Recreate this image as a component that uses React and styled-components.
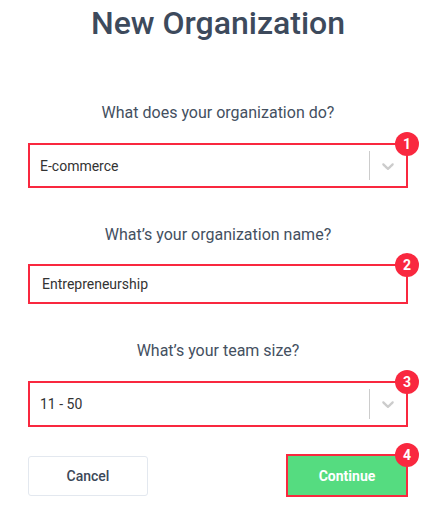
import React from "react";
import styled, { createGlobalStyle } from "styled-components";

const Global = createGlobalStyle`
  html, body { margin: 0; padding: 0; background: #ffffff; }
  body { font-family: Roboto, "Liberation Sans", Arial, sans-serif; }
`;

const Page = styled.div`
  width: 438px;
  padding: 3px 30px 0 28px;
  box-sizing: border-box;
  display: flex;
  flex-direction: column;
`;

const Title = styled.h1`
  margin: 0;
  font-size: 32px;
  line-height: 40px;
  font-weight: 500;
  color: #3d4a5c;
  text-align: center;
`;

const Question = styled.div`
  margin-top: ${(p) => p.$top}px;
  font-size: 16px;
  line-height: 20px;
  color: #44505f;
  text-align: center;
`;

const Field = styled.div`
  position: relative;
  margin-top: ${(p) => p.$top}px;
  height: ${(p) => p.$h}px;
  box-sizing: border-box;
  border: 2px solid #f9283f;
  display: flex;
  align-items: center;
  background: #fff;
`;

const Value = styled.div`
  flex: 1;
  padding-left: ${(p) => p.$pad}px;
  font-size: 14px;
  color: #333333;
`;

const Separator = styled.span`
  align-self: stretch;
  width: 1px;
  margin: 6px 0;
  background: #cccccc;
`;

const Indicator = styled.div`
  padding: 0 8px;
  display: flex;
  align-items: center;
  color: #cccccc;
`;

const Badge = styled.span`
  position: absolute;
  top: -13px;
  right: -13px;
  width: 24px;
  height: 24px;
  border-radius: 50%;
  background: #f9283f;
  color: #fff;
  font-size: 14px;
  font-weight: 700;
  display: flex;
  align-items: center;
  justify-content: center;
  line-height: 1;
`;

const Actions = styled.div`
  margin-top: 27px;
  display: flex;
  justify-content: space-between;
  align-items: center;
`;

const CancelButton = styled.button`
  width: 120px;
  height: 40px;
  box-sizing: border-box;
  border: 1px solid #e3e8ef;
  border-radius: 3px;
  background: #fff;
  font-family: inherit;
  font-size: 14px;
  font-weight: 500;
  color: #3c4858;
  cursor: pointer;
`;

const ContinueWrap = styled.div`
  position: relative;
  width: 122px;
  height: 43px;
  box-sizing: border-box;
  border: 2px solid #f9283f;
`;

const ContinueButton = styled.button`
  width: 100%;
  height: 100%;
  border: none;
  background: #55dc80;
  color: #fff;
  font-family: inherit;
  font-size: 14px;
  font-weight: 700;
  cursor: pointer;
`;

const Chevron = () => (
  <svg width="20" height="20" viewBox="0 0 20 20" fill="currentColor" aria-hidden="true">
    <path d="M4.516 7.548c0.436-0.446 1.043-0.481 1.576 0l3.908 3.747 3.908-3.747c0.533-0.481 1.141-0.446 1.574 0 0.436 0.445 0.408 1.197 0 1.615-0.406 0.418-4.695 4.502-4.695 4.502-0.217 0.223-0.502 0.335-0.787 0.335s-0.57-0.112-0.789-0.335c0 0-4.287-4.084-4.695-4.502s-0.436-1.17 0-1.615z" />
  </svg>
);

const SelectField = ({ value, badge, top, h }) => (
  <Field $top={top} $h={h}>
    <Value $pad={10}>{value}</Value>
    <Separator />
    <Indicator>
      <Chevron />
    </Indicator>
    <Badge>{badge}</Badge>
  </Field>
);

export default function App() {
  return (
    <>
      <Global />
      <Page>
        <Title>New Organization</Title>
        <Question $top={60}>What does your organization do?</Question>
        <SelectField value="E-commerce" badge="1" top={20} h={45} />
        <Question $top={37}>What’s your organization name?</Question>
        <Field $top={19} $h={40}>
          <Value $pad={12}>Entrepreneurship</Value>
          <Badge>2</Badge>
        </Field>
        <Question $top={37}>What’s your team size?</Question>
        <SelectField value="11 - 50" badge="3" top={20} h={46} />
        <Actions>
          <CancelButton>Cancel</CancelButton>
          <ContinueWrap>
            <ContinueButton>Continue</ContinueButton>
            <Badge>4</Badge>
          </ContinueWrap>
        </Actions>
      </Page>
    </>
  );
}
